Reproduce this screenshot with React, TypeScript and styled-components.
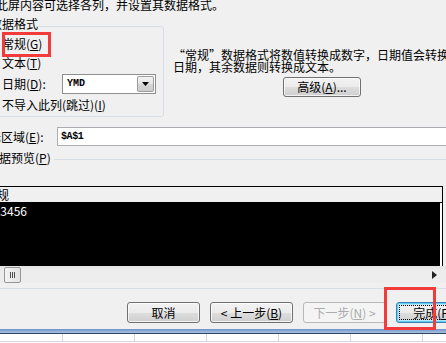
import React from "react";
import styled, { createGlobalStyle } from "styled-components";

const GlobalStyle = createGlobalStyle`
  html, body { margin: 0; padding: 0; background: #f0f0f0; overflow: hidden; }
  body {
    font-family: "Noto Sans CJK SC", "Noto Sans", sans-serif;
    font-size: 12px;
    color: #000;
  }
`;

const Screen = styled.div`
  position: relative;
  width: 446px;
  height: 343px;
  overflow: hidden;
`;

const Dialog = styled.div`
  height: 329px;
  background: #f0f0f0;
  display: flex;
  flex-direction: column;
`;

const Key = styled.span`
  text-decoration: underline;
  text-underline-offset: 1px;
`;

const Intro = styled.div`
  margin-top: -1px;
  margin-left: -28px;
  line-height: 12px;
  white-space: nowrap;
`;

const FormatRow = styled.div`
  display: flex;
  align-items: flex-start;
  margin-top: 7px;
`;

const Group = styled.fieldset`
  margin: 0 0 0 -10px;
  width: 174px;
  min-width: 0;
  box-sizing: border-box;
  flex-shrink: 0;
  border: 1px solid #d5dfe5;
  border-radius: 3px;
  padding: 0 0 5px 11px;
`;

const Legend = styled.legend`
  margin-left: -24px;
  padding: 0 0 4px 0;
  line-height: 12px;
  white-space: nowrap;
`;

const Option = styled.div<{ $top: number; $h?: number }>`
  margin-top: ${(p) => p.$top}px;
  height: ${(p) => p.$h ?? 12}px;
  display: flex;
  align-items: center;
  line-height: 12px;
  white-space: nowrap;
`;

const DateLabel = styled.span`
  width: 60px;
  flex-shrink: 0;
`;

const Combo = styled.div`
  width: 94px;
  height: 20px;
  box-sizing: border-box;
  border: 1px solid #8e8f8f;
  background: #fff;
  display: flex;
  align-items: stretch;
`;

const ComboText = styled.span`
  flex: 1;
  padding-left: 4px;
  font: bold 10px "Liberation Mono", monospace;
  line-height: 18px;
`;

const ComboButton = styled.span`
  width: 17px;
  margin: 1px;
  box-sizing: border-box;
  border: 1px solid #9c9c9c;
  border-radius: 2px;
  background: linear-gradient(#f3f3f3, #e4e4e4 50%, #d6d6d6 51%, #cdcdcd);
  display: flex;
  align-items: center;
  justify-content: center;
`;

const Desc = styled.div`
  margin-left: 9px;
  padding-top: 31px;
  display: flex;
  flex-direction: column;
  align-items: flex-start;
  white-space: nowrap;
  line-height: 12px;
`;

const Button = styled.button<{ $w: number; $variant?: "default" | "disabled" | "primary" }>`
  position: relative;
  width: ${(p) => p.$w}px;
  height: 21px;
  flex-shrink: 0;
  box-sizing: border-box;
  padding: 0;
  font: inherit;
  font-size: 12px;
  line-height: 19px;
  white-space: nowrap;
  border-radius: 3px;
  border: 1px solid
    ${(p) => (p.$variant === "disabled" ? "#b5b9bc" : p.$variant === "primary" ? "#3c7fb1" : "#707070")};
  color: ${(p) => (p.$variant === "disabled" ? "#ababab" : "#000")};
  background: ${(p) =>
    p.$variant === "disabled"
      ? "#f4f4f4"
      : "linear-gradient(#f2f2f2 0%, #ebebeb 50%, #dddddd 51%, #cfcfcf 100%)"};
  box-shadow: ${(p) =>
    p.$variant === "primary"
      ? "inset 0 0 0 1px #5fd0f5, inset 0 0 0 2px #b6e6f8"
      : p.$variant === "disabled"
      ? "none"
      : "inset 0 0 0 1px rgba(255,255,255,0.7)"};
  &::after {
    content: "";
    display: ${(p) => (p.$variant === "primary" ? "block" : "none")};
    position: absolute;
    inset: 2px;
    border: 1px dotted #000;
  }
`;

const AdvancedButton = styled(Button)`
  margin-top: 4px;
  margin-left: 110px;
  height: 20px;
  line-height: 18px;
`;

const RangeRow = styled.div`
  margin-top: 10px;
  height: 19px;
  display: flex;
  align-items: center;
  white-space: nowrap;
`;

const RangeLabel = styled.span`
  margin-left: -23px;
  width: 80px;
  flex-shrink: 0;
  line-height: 12px;
`;

const RangeInput = styled.div`
  flex: 1;
  margin-right: -20px;
  height: 19px;
  box-sizing: border-box;
  border: 1px solid #abadb3;
  background: #fff;
  padding-left: 3px;
  font: bold 10px "Liberation Mono", monospace;
  letter-spacing: -0.4px;
  line-height: 17px;
`;

const PreviewLabelRow = styled.div`
  margin-top: 6px;
  height: 12px;
  display: flex;
  align-items: flex-start;
  white-space: nowrap;
  line-height: 12px;
`;

const PreviewLabel = styled.span`
  margin-left: -13px;
`;

const Rule = styled.div`
  flex: 1;
  margin: 7px 0 0 3px;
  border-top: 1px solid #d5dfe5;
`;

const Preview = styled.div`
  margin-top: 22px;
  margin-left: -20px;
  width: 463px;
  box-sizing: border-box;
  border: 1px solid #000;
  border-bottom: none;
`;

const PreviewHeader = styled.div`
  height: 15px;
  background: #f0f0f0;
  border-bottom: 1px solid #000;
  padding-left: 4px;
  line-height: 15px;
  white-space: nowrap;
`;

const PreviewBody = styled.div`
  height: 63px;
  box-sizing: border-box;
  background: #000;
  border-right: 2px solid #fff;
  color: #fff;
  padding: 1px 0 0 6px;
  line-height: 14px;
  white-space: nowrap;
`;

const ScrollBar = styled.div`
  margin-left: -20px;
  width: 466px;
  height: 17px;
  background: linear-gradient(#e3e3e3, #ededed 30%, #ededed);
  display: flex;
  align-items: flex-start;
`;

const Thumb = styled.div`
  margin: 1px 0 0 24px;
  width: 17px;
  height: 16px;
  box-sizing: border-box;
  border: 1px solid #979797;
  border-radius: 2px;
  background: linear-gradient(90deg, #f4f4f4, #e2e2e2);
  display: flex;
  align-items: center;
  justify-content: center;
`;

const ArrowRight = styled.svg`
  margin: 5px 9px 0 auto;
`;

const Separator = styled.div`
  margin-top: 5px;
  height: 1px;
  background: #d5dfe5;
`;

const ButtonRow = styled.div`
  margin-top: 13px;
  padding-left: 127px;
  display: flex;
  gap: 10px;
`;

const FrameEdge = styled.div`
  height: 4px;
  background: linear-gradient(#6e92c9, #a7c1e4);
  border-bottom: 1px solid #34465c;
`;

const Sheet = styled.div`
  height: 9px;
  background: #fff;
  display: flex;
  margin-left: -9px;
`;

const Cell = styled.div`
  width: 72px;
  height: 8px;
  flex-shrink: 0;
  box-sizing: border-box;
  border-right: 1px solid #d0d7e5;
  border-bottom: 1px solid #d0d7e5;
`;

const Highlight = styled.div<{ $x: number; $y: number; $w: number; $h: number }>`
  position: absolute;
  left: ${(p) => p.$x}px;
  top: ${(p) => p.$y}px;
  width: ${(p) => p.$w}px;
  height: ${(p) => p.$h}px;
  box-sizing: border-box;
  border: 3px solid #f23b3b;
  pointer-events: none;
`;

export default function App() {
  return (
    <Screen>
      <GlobalStyle />
      <Dialog>
        <Intro>使用此屏内容可选择各列，并设置其数据格式。</Intro>
        <FormatRow>
          <Group>
            <Legend>列数据格式</Legend>
            <Option $top={4}>
              常规(<Key>G</Key>)
            </Option>
            <Option $top={7}>
              文本(<Key>T</Key>)
            </Option>
            <Option $top={5} $h={20}>
              <DateLabel>
                日期(<Key>D</Key>):
              </DateLabel>
              <Combo>
                <ComboText>YMD</ComboText>
                <ComboButton>
                  <svg width="7" height="4" viewBox="0 0 7 4">
                    <path d="M0 0h7L3.5 4z" fill="#000" />
                  </svg>
                </ComboButton>
              </Combo>
            </Option>
            <Option $top={5}>
              不导入此列(跳过)(<Key>I</Key>)
            </Option>
          </Group>
          <Desc>
            <span>“常规”数据格式将数值转换成数字，日期值会转换成</span>
            <span>日期，其余数据则转换成文本。</span>
            <AdvancedButton $w={78} type="button">
              高级(<Key>A</Key>)...
            </AdvancedButton>
          </Desc>
        </FormatRow>
        <RangeRow>
          <RangeLabel>
            目标区域(<Key>E</Key>):
          </RangeLabel>
          <RangeInput>$A$1</RangeInput>
        </RangeRow>
        <PreviewLabelRow>
          <PreviewLabel>
            数据预览(<Key>P</Key>)
          </PreviewLabel>
          <Rule />
        </PreviewLabelRow>
        <Preview>
          <PreviewHeader>常规</PreviewHeader>
          <PreviewBody>123456</PreviewBody>
        </Preview>
        <ScrollBar>
          <Thumb>
            <svg width="6" height="6" viewBox="0 0 6 6">
              <path d="M0.5 0v6M2.5 0v6M4.5 0v6" stroke="#4d4d4d" strokeWidth="1" />
            </svg>
          </Thumb>
          <ArrowRight width="5" height="8" viewBox="0 0 5 8">
            <path d="M0 0L5 4L0 8z" fill="#222" />
          </ArrowRight>
        </ScrollBar>
        <Separator />
        <ButtonRow>
          <Button $w={73} type="button">取消</Button>
          <Button $w={83} type="button">
            &lt; 上一步(<Key>B</Key>)
          </Button>
          <Button $w={83} $variant="disabled" type="button" disabled>
            下一步(<Key>N</Key>) &gt;
          </Button>
          <Button $w={73} $variant="primary" type="button">
            完成(<Key>F</Key>)
          </Button>
        </ButtonRow>
      </Dialog>
      <FrameEdge />
      <Sheet>
        {Array.from({ length: 8 }).map((_, i) => (
          <Cell key={i} />
        ))}
      </Sheet>
      <Highlight $x={2} $y={32} $w={49} $h={25} />
      <Highlight $x={384} $y={287} $w={52} $h={43} />
    </Screen>
  );
}
